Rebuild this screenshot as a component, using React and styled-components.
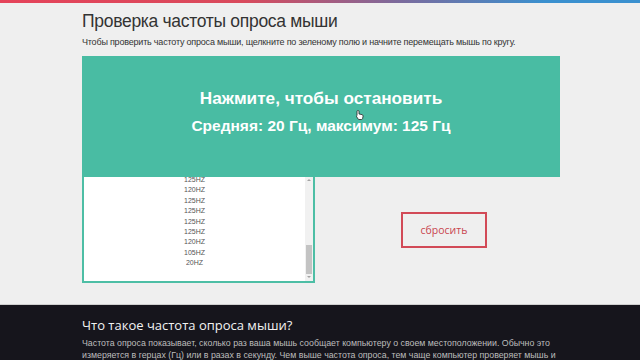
import React from 'react';
import styled, { createGlobalStyle } from 'styled-components';

const Global = createGlobalStyle`
  html, body { margin: 0; padding: 0; background: #efefef; }
  body { font-family: "Liberation Sans", Arial, sans-serif; }
`;

const TopBar = styled.div`
  height: 3px;
  background: linear-gradient(to right, #e5435a 0%, #d94a5c 38%, #7d6a9c 62%, #3a90cf 85%, #3a90cf 100%);
`;

const Main = styled.main`
  width: 478px;
  margin: 0 0 0 82px;
  padding-top: 7px;
`;

const Title = styled.h1`
  margin: 0;
  font-family: "Liberation Sans", sans-serif;
  font-weight: 400;
  font-size: 17.5px;
  letter-spacing: -0.3px;
  line-height: 22px;
  color: #333;
`;

const Lead = styled.p`
  margin: 4px 0 8px;
  font-family: "Liberation Sans", sans-serif;
  font-size: 9px;
  letter-spacing: -0.2px;
  line-height: 12px;
  color: #333;
`;

const Panel = styled.div`
  position: relative;
  height: 121px;
  background: #49bca3;
  display: flex;
  flex-direction: column;
  align-items: center;
  padding-top: 32px;
  box-sizing: border-box;
  color: #fff;
  font-weight: 700;
`;

const PanelLine = styled.div`
  font-size: ${p => p.$size}px;
  line-height: 20px;
  margin-top: ${p => p.$gap || 0}px;
`;

const Cursor = styled.svg`
  position: absolute;
  left: 274px;
  top: 54px;
`;

const Row = styled.div`
  display: flex;
  height: 106px;
`;

const ListBox = styled.div`
  width: 233px;
  box-sizing: border-box;
  border: 2px solid #4dbea5;
  border-top: none;
  background: #fff;
  display: flex;
  overflow: hidden;
`;

const Items = styled.div`
  flex: 1;
  margin-top: -2px;
  display: flex;
  flex-direction: column;
  align-items: center;
  font-size: 7px;
  line-height: 10.4px;
  color: #555;
`;

const Track = styled.div`
  width: 8px;
  background: #f1f1f1;
  display: flex;
  flex-direction: column;
  align-items: center;
  padding: 2px 0 3px;
  box-sizing: border-box;
`;

const Arrow = styled.div`
  width: 0;
  height: 0;
  border-left: 2px solid transparent;
  border-right: 2px solid transparent;
  ${p => (p.$down ? 'border-top: 2px solid #a3a3a3;' : 'border-bottom: 2px solid #a3a3a3;')}
`;

const TrackSpace = styled.div`
  flex: 1;
  display: flex;
  flex-direction: column;
  justify-content: flex-end;
  padding: 2px 0;
`;

const Thumb = styled.div`
  width: 6px;
  height: 29px;
  background: #c3c3c3;
`;

const Side = styled.div`
  flex: 1;
  display: flex;
  align-items: center;
  justify-content: center;
  padding-left: 13px;
`;

const ResetButton = styled.button`
  width: 86px;
  height: 36px;
  box-sizing: border-box;
  border: 2px solid #d24a57;
  background: transparent;
  color: #c9464f;
  font-family: "Open Sans", sans-serif;
  font-size: 10.5px;
  padding: 0;
  cursor: pointer;
`;

const Info = styled.section`
  margin-top: 21px;
  border-top: 1px solid #cfcfcf;
  background: #16151c;
  padding: 11px 0 20px 82px;
  min-height: 80px;
`;

const InfoTitle = styled.h2`
  margin: 0;
  font-family: "Open Sans", sans-serif;
  font-weight: 400;
  font-size: 13px;
  line-height: 18px;
  color: #f2f2f2;
`;

const InfoText = styled.p`
  margin: 3px 0 0;
  width: 480px;
  font-family: "Liberation Sans", sans-serif;
  font-size: 8.8px;
  line-height: 12px;
  color: #bdbdbd;
`;

const rates = ['125HZ', '120HZ', '125HZ', '125HZ', '125HZ', '125HZ', '120HZ', '105HZ', '20HZ'];

export default function App() {
  return (
    <>
      <Global />
      <TopBar />
      <Main>
        <Title>Проверка частоты опроса мыши</Title>
        <Lead>Чтобы проверить частоту опроса мыши, щелкните по зеленому полю и начните перемещать мышь по кругу.</Lead>
        <Panel>
          <PanelLine $size={17.2}>Нажмите, чтобы остановить</PanelLine>
          <PanelLine $size={15.5} $gap={8}>Средняя: 20 Гц, максимум: 125 Гц</PanelLine>
          <Cursor width="8" height="10" viewBox="0 0 8 10">
            <path d="M2 0.5 C2.6 0.5 3 0.9 3 1.5 V4 L6 4.6 C6.8 4.8 7.2 5.3 7.1 6.1 L6.6 8.5 C6.5 9.1 6 9.5 5.4 9.5 H3 C2.6 9.5 2.3 9.3 2.1 9 L0.6 6.6 C0.3 6.1 0.5 5.6 1 5.6 L1 1.5 C1 0.9 1.4 0.5 2 0.5 Z" fill="#fff" stroke="#222" strokeWidth="0.8" />
          </Cursor>
        </Panel>
        <Row>
          <ListBox>
            <Items>
              {rates.map((r, i) => (
                <div key={i}>{r}</div>
              ))}
            </Items>
            <Track>
              <Arrow />
              <TrackSpace>
                <Thumb />
              </TrackSpace>
              <Arrow $down />
            </Track>
          </ListBox>
          <Side>
            <ResetButton>сбросить</ResetButton>
          </Side>
        </Row>
      </Main>
      <Info>
        <InfoTitle>Что такое частота опроса мыши?</InfoTitle>
        <InfoText>
          Частота опроса показывает, сколько раз ваша мышь сообщает компьютеру о своем местоположении. Обычно это
          измеряется в герцах (Гц) или в разах в секунду. Чем выше частота опроса, тем чаще компьютер проверяет мышь и
          тем плавнее и точнее будет движение курсора на экране.
        </InfoText>
      </Info>
    </>
  );
}
